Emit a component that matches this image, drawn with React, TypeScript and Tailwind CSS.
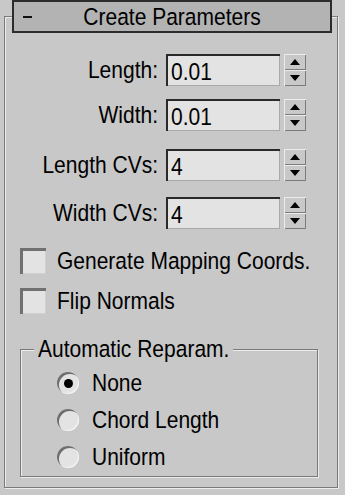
import React from "react";

const font = { fontFamily: '"Liberation Sans", Arial, sans-serif' };

function T({ children }: { children: React.ReactNode }) {
  return <span className="inline-block scale-y-[1.12] whitespace-nowrap">{children}</span>;
}

function Spinner() {
  return (
    <div className="ml-[4px] flex h-[32px] w-[22px] flex-col">
      <div className="flex h-[16px] items-center justify-center bg-[#c8c8c8] shadow-[inset_1px_1px_0_#ececec,inset_-1px_-1px_0_#7c7c7c]">
        <svg width="10" height="6" viewBox="0 0 10 6"><polygon points="5,0 10,6 0,6" fill="#000" /></svg>
      </div>
      <div className="flex h-[16px] items-center justify-center bg-[#c8c8c8] shadow-[inset_1px_1px_0_#ececec,inset_-1px_-1px_0_#7c7c7c]">
        <svg width="10" height="6" viewBox="0 0 10 6"><polygon points="0,0 10,0 5,6" fill="#000" /></svg>
      </div>
    </div>
  );
}

function Row({ label, value, mt }: { label: string; value: string; mt: string }) {
  return (
    <div className={`flex items-center ${mt}`}>
      <div className="w-[153px] text-right leading-[32px]"><T>{label}</T></div>
      <div className="ml-[8px] flex h-[32px] w-[114px] items-center border-l-2 border-t-2 border-[#2a2a2a] bg-[#e3e3e3] pl-[3px] shadow-[inset_-1px_-1px_0_#a9a9a9]">
        <span className="leading-none"><T>{value}</T></span>
      </div>
      <Spinner />
    </div>
  );
}

function Check({ label, mt }: { label: string; mt: string }) {
  return (
    <div className={`flex items-center pl-[15px] ${mt}`}>
      <div className="h-[26px] w-[26px] shrink-0 bg-[#e3e3e3] shadow-[inset_3px_3px_0_#707070,inset_-1px_-1px_0_#d0d0d0]" />
      <span className="ml-[11px] leading-[26px]"><T>{label}</T></span>
    </div>
  );
}

function Radio({ label, checked, mt }: { label: string; checked?: boolean; mt: string }) {
  return (
    <div className={`flex items-center pl-[36px] ${mt}`}>
      <div className="flex h-[22px] w-[22px] shrink-0 items-center justify-center rounded-full bg-[#e3e3e3] shadow-[inset_2px_2px_0_#6e6e6e,inset_-1px_-1px_0_#f4f4f4]">
        {checked && <div className="ml-[1px] mt-[1px] h-[9px] w-[9px] rounded-full bg-black" />}
      </div>
      <span className="ml-[13px] leading-[22px]"><T>{label}</T></span>
    </div>
  );
}

export default function App() {
  return (
    <div className="h-[495px] w-[345px] overflow-hidden bg-[#c8c8c8] pt-[16px] pl-[4px] text-[21px] text-black" style={font}>
      <div className="h-[472px] w-[334px] border border-[#7a7a7a] shadow-[inset_1px_1px_0_#ececec,1px_1px_0_#ececec]">
        <div className="relative -mt-[17px] ml-[7px] flex h-[33px] w-[320px] items-center border-2 border-[#2c2c2c] bg-[#b3b3b3]">
          <div className="absolute left-[9px] top-[14px] h-[2px] w-[9px] bg-[#111]" />
          <div className="w-full text-center leading-none"><T>Create Parameters</T></div>
        </div>
        <Row label="Length:" value="0.01" mt="mt-[21px]" />
        <Row label="Width:" value="0.01" mt="mt-[13px]" />
        <Row label="Length CVs:" value="4" mt="mt-[18px]" />
        <Row label="Width CVs:" value="4" mt="mt-[16px]" />
        <Check label="Generate Mapping Coords." mt="mt-[19px]" />
        <Check label="Flip Normals" mt="mt-[14px]" />
        <div className="ml-[15px] mt-[35px] h-[128px] w-[298px] border border-[#7a7a7a] shadow-[inset_1px_1px_0_#ececec,1px_1px_0_#ececec]">
          <div className="-mt-[14px] ml-[13px] w-fit bg-[#c8c8c8] px-[4px] leading-[26px]"><T>Automatic Reparam.</T></div>
          <Radio label="None" checked mt="mt-[10px]" />
          <Radio label="Chord Length" mt="mt-[15px]" />
          <Radio label="Uniform" mt="mt-[15px]" />
        </div>
      </div>
    </div>
  );
}
